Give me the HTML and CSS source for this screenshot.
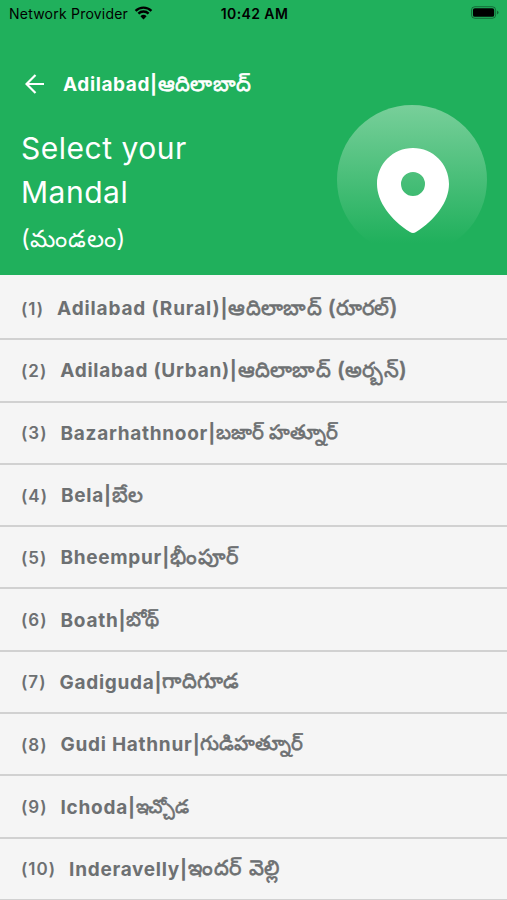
FILE: index.html
```html
<!DOCTYPE html>
<html lang="te"><head><meta charset="utf-8"><title>Select your Mandal</title><link rel="stylesheet" href="styles.css"></head>
<body>
<header class="header">
<div class="status"><div class="carrier"><span>Network Provider</span><svg class="wifi" viewBox="0 0 20 15"><path d="M10 14.5 6.7 11a4.8 4.8 0 0 1 6.6 0z"/><path d="M1.500 6.200a12 12 0 0 1 17 0M4.500 9.200a7.800 7.800 0 0 1 11 0" transform="translate(0 -1)" fill="none" stroke="#000" stroke-width="2.5"/></svg></div><time>10:42 AM</time><svg class="battery" viewBox="0 0 30 14"><rect x=".5" y=".5" width="25" height="12" rx="3.500" fill="none" stroke="#000" stroke-opacity=".4"/><rect x="2" y="2" width="22" height="9" rx="2"/><path d="M27 4.500q3 2 0 4z" fill-opacity=".5"/></svg></div>
<nav class="nav"><svg class="back" viewBox="0 0 20 20"><path d="M19 10H2M10.500 1 1.500 10l9 9" fill="none" stroke="#fff" stroke-width="2.2"/></svg><b><span class="en">Adilabad|</span><span class="te">ఆదిలాబాద్</span></b></nav>
<div class="hero"><div class="title"><h1>Select your<br>Mandal</h1><p>(మండలం)</p></div><div class="disc"><svg class="pin" viewBox="0 0 72 85"><path fill-rule="evenodd" d="M36 0C16 0 0 16 0 36c0 18 14 36 33 48q3 2 6 0c19-12 33-30 33-48C72 16 56 0 36 0zm0 24a12 12 0 1 1 0 24 12 12 0 0 1 0-24z"/></svg></div></div>
</header>
<main class="list">
<div class="row"><span class="num">(1)</span><span class="en wide">Adilabad (Rural)|</span><span class="te">ఆదిలాబాద్ (రూరల్)</span></div>
<div class="row"><span class="num">(2)</span><span class="en">Adilabad (Urban)|</span><span class="te">ఆదిలాబాద్ (అర్బన్)</span></div>
<div class="row"><span class="num">(3)</span><span class="en">Bazarhathnoor|</span><span class="te tight">బజార్ హత్నూర్</span></div>
<div class="row"><span class="num">(4)</span><span class="en">Bela|</span><span class="te">బేల</span></div>
<div class="row"><span class="num">(5)</span><span class="en">Bheempur|</span><span class="te loose">భీంపూర్</span></div>
<div class="row"><span class="num">(6)</span><span class="en">Boath|</span><span class="te tight">బోథ్</span></div>
<div class="row"><span class="num">(7)</span><span class="en">Gadiguda|</span><span class="te">గాదిగూడ</span></div>
<div class="row"><span class="num">(8)</span><span class="en">Gudi Hathnur|</span><span class="te tight">గుడిహత్నూర్</span></div>
<div class="row"><span class="num">(9)</span><span class="en">Ichoda|</span><span class="te tighter">ఇచ్చోడ</span></div>
<div class="row"><span class="num">(10)</span><span class="en">Inderavelly|</span><span class="te loose">ఇందర్ వెల్లి</span></div>
</main>
</body></html>
```
FILE: styles.css
```css
*{box-sizing:border-box}
body{margin:0;width:507px;height:900px;overflow:hidden;background:#f5f5f5;font-family:Inter,"Noto Sans",sans-serif}
.header{height:274.500px;background:#20b05c;color:#fff}
.status{height:28px;display:grid;grid-template-columns:1fr auto 1fr;align-items:center;padding:0 7px 2px 9px;color:#000;font-size:14px}
.carrier{display:flex;align-items:center;gap:6px;letter-spacing:.22px}
.wifi{width:19px;height:14px;margin-top:-1px}
.status time{font-weight:600;letter-spacing:.4px}
.battery{width:29px;height:14px;justify-self:end}
.nav{display:flex;align-items:center;height:56px;margin-top:28px;padding-left:25px;gap:18px;font-size:19px}
.back{width:20px;height:20px}
.nav b{display:flex;align-items:baseline;padding-top:3px}
.nav .en{letter-spacing:.6px}
.hero{display:flex;justify-content:space-between;padding:0 20px 0 21px}
.title{padding-top:14px}
h1{margin:0;font-size:30px;font-weight:400;line-height:44px;letter-spacing:.5px}
p{margin:7px 0 0;font-size:24px;line-height:36px;letter-spacing:.7px}
.disc{width:150px;height:150px;margin-top:-7px;border-radius:50%;background:linear-gradient(#78cf9a,#20b05c 92%);display:flex;justify-content:center;padding:43px 0 0 2px}
.pin{width:72px;height:85px;fill:#fff}
.list{padding-top:3.500px}
.row{display:flex;align-items:center;height:62.3px;border-bottom:2px solid #d1d1d1;padding:1px 0 0 21px;color:#6d7072;font-size:19px;font-weight:700;white-space:nowrap}
.num{font-size:17px;font-weight:600;margin-right:13px;letter-spacing:1px}
.en{letter-spacing:.72px}
.wide{letter-spacing:.85px}
.te{font-size:21px;font-weight:500;letter-spacing:.3px;-webkit-text-stroke:.6px currentColor}
.row .te{padding-top:2px}
.tight{font-size:20px;letter-spacing:0}
.tighter{font-size:19px;letter-spacing:-.4px}
.loose{letter-spacing:.8px}
```
